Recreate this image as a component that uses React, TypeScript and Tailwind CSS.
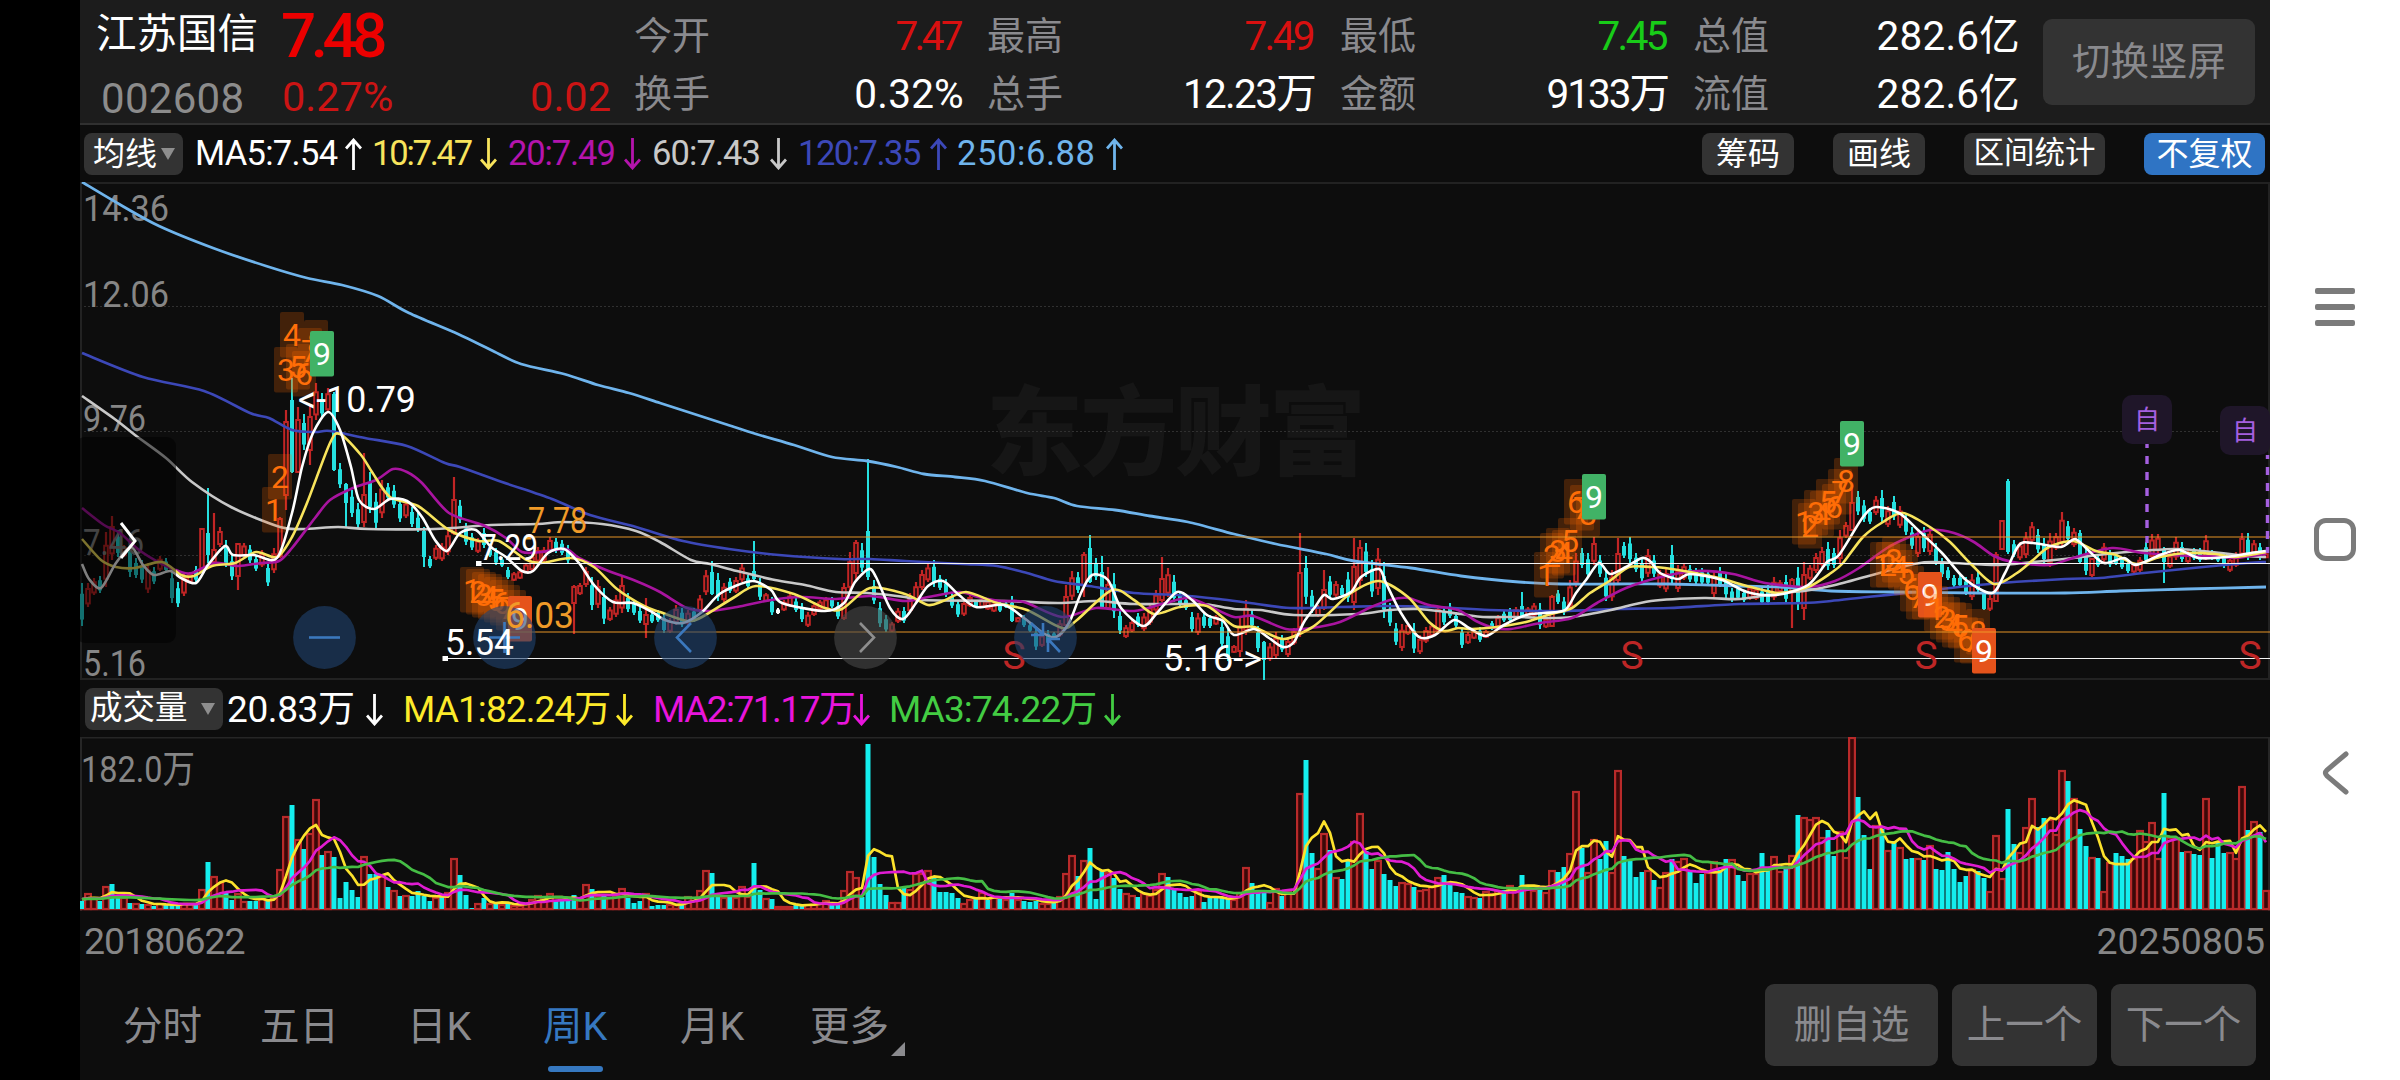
import { ReactNode } from "react"

// one token per week: colour (c = down, r = up), high y, low y, optional body top and bottom
const CANDLES = `
c583,626 r583,607 r578,595 c576,593 r532,587 r516,560 c530,557 r545,557 c543,577 c558,578
c560,583 r563,593 c567,584 r556,571 c558,572 c570,603 c582,607 r573,596 r572,583 c566,582
r528,573,529,572 c488,563,533,555 r513,563,550,562 r527,547 c540,567 c555,580 r543,590,544,576 r543,557 c545,563 c555,571
r550,567 c562,586 r548,573 r517,558,519,556 r410,510,422,495 c378,473,400,472 r407,473,420,472 c414,450 r405,465,417,450 r383,420
c393,417 r388,413 c392,471,394,470 c463,488 c483,527,484,503 c490,517 c503,528 r453,527,495,522 c472,513 c493,528
r480,518 c483,500 c485,508 c498,522 r500,518 c507,527 c513,532 c527,567,531,557 c556,568 r545,560
r543,561 r530,555 r477,535,500,533 c500,523 c523,545 c533,550 r538,553 c528,548 c547,557 c548,565
c557,567 c567,579 r572,581 r570,579 r563,573 r553,572 r547,563 r547,562 r537,553 c538,553
c540,555 c545,563 r585,634,587,603 r583,595 r567,587 c577,610 r580,608 c588,624 r607,621 r595,617
r577,613 c593,612 c600,615 c607,623 r598,638,615,624 c612,623 c610,622 c613,633 r618,633 r605,625
c608,627 r610,625 c608,622 r595,613 r570,595 c561,595,572,594 c573,601 r583,602 c578,593 r577,593
r564,582 c575,588 c541,580,571,579 c578,600 r593,602 c597,615 w608,614 r600,611 r593,607 c598,612
c603,622 r612,627 r603,616 r600,610 r597,610 c597,608 c602,619 r583,620,588,618 r552,593 r540,580,543,573
c543,572 c459,580,531,577 c580,604 c602,627 c615,632 r622,632 r608,623 c607,623 r593,613 r582,603
r570,590 r564,582 c560,587 c575,590 c579,597 c592,608 c600,617 r600,616 r595,607 c600,608
r598,608 r600,610 r602,612 c602,612 c602,608 c596,622,603,621 r617,622 c615,627 c623,632 c627,650
r633,647 c630,645 c632,638 r620,637 r585,628,597,625 r571,600 c572,593 r552,597,555,585 c535,583,548,582 c558,580
c556,608,572,607 r567,610,585,608 c573,618 c610,634 r625,638 r620,632 c613,627 r613,631 r603,625 r590,613
r557,602,579,600 r568,597 c575,602 c592,607 c597,610 c612,632 r613,635 c613,628 c615,628 r615,625
c620,648 c628,661 r645,653 r617,657 r600,635 c610,628 c626,652 c641,680,642,660 r643,661 r632,659
c635,652 r637,657 r628,645 r533,637,573,627 c556,604 c590,613 r605,617 r570,610,590,608 c576,598 r581,597
c585,597 c572,602 r538,610,567,602 r540,587,548,580 c543,577 c560,597 r548,595 c562,618 c603,626 c623,645
r624,651 r623,635 c623,653 r635,654 r627,643 r623,637 r607,633,610,631 c607,625 c603,618 c612,628
c627,648 r632,644 r630,639 c627,642 r630,638 c621,630 r615,628 c611,622 c608,622 r607,620
c592,618,606,616 r607,617 r603,617 c603,629 r617,628 r595,627,597,626 c590,604 c597,615 r580,610 r553,587
c548,568 c553,578 r537,565 c555,577 c570,601 r570,601 r538,583,554,580 c542,558 c537,563 c553,572
c557,582 r549,577 c555,577 r570,588 r568,592 c545,585 r565,592 r563,580 c565,582 c568,584
c568,585 c570,585 r571,597 c567,587 c573,598 c588,602 c585,600 c590,602 r585,600 r587,600
c587,605 c585,605 r577,600 r580,593 c575,603 r578,628,580,592 c567,610 r562,620,575,608 r565,580 r553,573
r547,567 c542,570 c548,568 r530,563 r522,538 r485,530,503,530 c491,515 c500,522 c508,524 r496,515
c490,522 r506,527 c496,520 r506,528 c513,535 c527,549 r530,557 c527,552 r528,555 c543,565
c558,577 c567,580 c575,587 c575,587 c577,595 r574,600 c572,593 c590,610,593,609 r595,611 r552,602,555,601
r520,550,521,549 c479,554,481,552 c540,557 r542,560 r532,558 r522,543 c529,553 c538,563 r533,567 r533,550
r512,547 c521,542 r528,547 c530,563,533,562 c547,575 r558,577,559,575 c555,567 r543,562 c550,567 c553,565
c557,569 c560,573 r563,573 r557,572 c542,563 r534,560 r534,553 c547,583,550,562 r553,568 r537,560
c542,562 r550,563 c548,560 c548,562 r535,560 c550,560 c552,562 c553,568 r557,572 r552,567
r533,557 c533,560 r540,557 c543,560 r553,558`

const VOLUMES = `
c8 r16 r12 c8 r23 c25 c12 r12 c6 r6 c5 r5 c3 r6 c4 c4 c4 r6 r6 c5
r20 c47 r33 r27 c16 c9 r16 r8 c8 c8 r11 c8 r12 r40 r93 c104 r70 c60 r76 r110
c54 r58 c52 c11 c27 c19 c12 r53 c35 c35 r33 c22 r19 c13 r14 c13 c18 c13 c8 r12
c12 r17 r51 c34 c14 c1 r6 c11 r6 c5 r5 c5 r4 r4 r6 r10 r14 r11 r16 c9
c9 c9 c14 r11 r25 c20 r14 c15 r12 r14 r21 c11 c6 c8 r16 c3 c4 c4 r5 r5
c5 r13 r12 r19 r39 c36 c14 r12 c12 r12 r23 r13 c46 c19 r11 c10 r3 r3 r3 c4
c5 r5 r5 r6 r9 c4 c4 r19 r38 r32 c12 c165 c52 c25 c14 r7 r7 c21 r20 r36
r36 r39 c32 c17 c17 c16 c11 r6 r10 c10 r17 c9 r12 c10 r10 c16 r10 c8 c7 c8
r6 r6 c7 r13 r36 r54 c33 r49 c61 c10 c38 r37 c31 c20 r16 r14 c12 r16 r14 r20
r36 c32 c19 c16 c12 c13 r18 c7 c11 c11 c11 c11 r10 r17 r42 c26 c17 c17 r7 r21
c13 r19 r17 r116 c149 c56 r41 r76 c59 r32 c30 c48 r68 r96 c58 c40 r49 c35 c29 c23
r27 r26 c22 r19 r20 r23 r32 c34 c25 c17 c16 r13 r12 c11 r18 r16 r19 c19 r24 r19
c34 r21 r19 c19 r17 r39 c37 c42 r56 r118 c61 r37 r70 c50 c68 r37 r139 c53 c48 c32
c37 r39 c29 r22 r37 c50 r48 r51 c37 c26 c35 r37 r48 c39 c50 r50 c34 c28 r36 r36
c56 c38 r53 r38 c40 r54 c94 r92 r90 r92 r72 c79 c53 r78 r52 r172 c112 c74 c40 r84
c80 r59 c68 r62 c50 c51 r51 c49 r64 c40 c39 c57 c40 c27 c33 r40 c38 c31 r18 r74
r31 c100 c65 r57 r82 r111 c82 c91 r90 r75 r139 c128 r111 c80 c63 r52 c51 r18 r47 c56
c53 c50 r51 r79 r68 r87 r51 c116 r72 r72 c57 r58 c55 c54 r111 c51 c66 c56 r57 r51
r123 c79 r88 c77 r19`

const LINES = [
    { color: "#6fb4ec", pts: "82,182 119,204 159,226 213,248 266,266 307,278 342,285 378,296 409,313 458,334 491,350 521,364 564,374 598,385 629,393 660,403 691,413 725,424 756,434 794,445 832,457 867,461 897,467 924,474 955,477 985,481 1027,493 1054,498 1077,506 1115,510 1150,516 1188,522 1234,534 1276,544 1326,554 1354,561 1411,568 1461,576 1519,582 1561,584 1615,584 1669,584 1740,586 1780,587 1831,591 1899,592 1978,593 2065,593 2120,591 2187,589 2266,587" },
    { color: "#3c48b8", pts: "82,353 143,377 204,391 250,413 269,418 292,430 315,432 330,431 365,438 407,446 445,463 460,467 502,482 552,499 590,515 636,527 683,541 729,549 779,555 840,559 870,559 905,561 962,564 997,566 1027,573 1054,581 1089,586 1134,593 1177,595 1219,599 1250,603 1290,608 1340,607 1383,606 1433,607 1490,610 1561,611 1615,609 1669,608 1740,604 1804,603 1831,601 1867,597 1907,593 1950,588 2001,583 2065,579 2100,578 2144,573 2203,567 2247,563 2266,562" },
    { color: "#c8c8c8", pts: "82,396 116,420 135,435 166,458 192,482 231,507 280,527 303,529 338,527 368,529 434,529 491,525 537,524 564,522 602,524 636,531 660,542 691,560 710,564 737,571 775,580 805,585 836,592 867,593 905,597 920,600 1004,601 1058,603 1096,601 1134,604 1196,604 1211,605 1234,609 1261,610 1294,615 1358,614 1390,610 1419,609 1461,614 1483,617 1519,617 1547,618 1572,617 1611,610 1651,601 1704,598 1740,599 1780,593 1804,591 1835,585 1883,572 1914,564 1934,562 1994,565 2033,562 2073,558 2116,553 2175,549 2211,552 2247,556 2266,557" },
    { color: "#a8149f", pts: "82,508 104,525 120,533 139,550 162,564 181,572 192,573 215,563 238,566 261,563 279,561 292,548 315,518 330,500 353,488 376,480 393,469 407,472 422,483 449,513 483,525 506,538 522,552 541,552 566,549 579,558 606,570 636,581 660,592 687,608 710,611 737,607 771,600 802,597 836,599 870,596 905,601 928,597 959,592 978,597 1001,601 1024,602 1062,617 1096,608 1134,611 1165,603 1188,598 1207,605 1234,617 1253,616 1286,629 1311,628 1340,622 1369,608 1390,600 1408,598 1429,605 1458,610 1476,621 1494,628 1511,629 1540,623 1572,618 1597,603 1626,588 1661,577 1697,571 1733,574 1765,583 1808,587 1835,581 1859,568 1887,548 1907,538 1930,530 1954,533 1974,542 1994,556 2013,562 2049,565 2073,558 2112,548 2144,553 2191,556 2215,556 2235,558 2266,554" },
    { color: "#f8e45c", pts: "82,539 101,560 116,567 135,568 162,562 181,575 194,576 212,566 235,563 256,552 277,557 292,537 307,503 330,443 340,434 361,455 372,472 390,497 418,506 449,530 479,541 499,541 525,559 541,563 571,558 594,567 617,589 644,606 660,612 687,621 702,617 733,598 756,586 794,594 825,608 842,609 870,588 905,594 928,605 943,601 966,592 997,603 1027,610 1062,628 1077,620 1112,590 1134,600 1154,614 1180,607 1207,606 1234,626 1254,627 1283,639 1311,628 1329,613 1351,593 1379,581 1408,597 1429,622 1444,631 1458,628 1472,629 1497,627 1526,622 1551,614 1572,608 1590,593 1611,580 1629,567 1651,567 1665,568 1690,572 1719,578 1751,587 1779,593 1808,587 1831,573 1843,563 1863,537 1883,522 1903,513 1930,527 1950,542 1970,563 1994,584 2017,573 2033,560 2049,547 2073,541 2096,551 2116,555 2136,564 2160,557 2187,553 2215,554 2235,557 2266,552" },
    { color: "#ffffff", pts: "82,564 89,579 101,588 116,563 131,547 143,565 154,575 170,571 181,578 196,583 208,565 225,546 233,555 254,555 277,558 292,513 302,467 313,433 328,412 340,430 351,467 359,500 374,509 390,499 407,501 422,517 435,540 447,551 460,533 476,530 491,547 506,557 522,571 533,571 548,553 564,549 579,563 594,585 613,602 633,603 652,612 665,620 683,623 702,612 721,593 752,581 771,590 782,603 825,611 844,603 855,582 869,569 876,577 890,608 903,619 916,603 928,586 943,581 959,595 976,607 1004,605 1024,618 1043,633 1056,637 1069,623 1081,593 1092,575 1108,580 1121,608 1143,626 1157,613 1177,592 1192,600 1207,615 1223,621 1234,635 1254,629 1269,638 1283,647 1294,642 1304,622 1315,607 1324,595 1333,599 1351,592 1361,577 1379,569 1386,583 1401,613 1419,637 1435,635 1454,620 1469,628 1486,636 1504,625 1526,615 1544,613 1565,610 1576,593 1586,580 1599,563 1610,574 1626,567 1642,558 1651,562 1660,573 1678,579 1690,574 1722,580 1747,592 1776,595 1808,585 1827,562 1839,555 1863,517 1876,507 1899,513 1918,530 1942,553 1966,580 1992,593 2005,573 2019,545 2033,543 2061,547 2075,539 2088,550 2104,563 2124,558 2136,565 2160,555 2179,550 2199,558 2227,557 2251,553 2266,551" },
]

// first candle index of every 1..9 count, the box tops, and the colour of the last box
const COUNTS = [
    { start: 32, tops: [487, 454, 347, 312, 344, 351, 328, 320, 331], end: "#41b266" },
    { start: 65, tops: [567, 569, 572, 574, 577, 580, 585, 590, 596], end: "#e5531b" },
    { start: 244, tops: [552, 533, 528, 530, 518, 479, 485, 491, 474], end: "#41b266" },
    { start: 287, tops: [499, 503, 490, 491, 479, 484, 469, 458, 421], end: "#41b266" },
    { start: 300, tops: [542, 542, 537, 544, 550, 566, 574, 574, 572], end: "#e5531b" },
    { start: 309, tops: [586, 594, 597, 602, 603, 617, 618, 609, 628], end: "#e5531b" },
]

const X = (i: number) => 82 + i * 6

const candles = CANDLES.trim().split(/\s+/).map((t) => {
    const n = t.slice(1).split(",").map(Number)
    const range = n[1] - n[0]
    return { kind: t[0], hi: n[0], lo: n[1], top: n[2] ?? n[0] + range * 0.25, bot: n[3] ?? n[1] - range * 0.15 }
})

const volumes = VOLUMES.trim().split(/\s+/).map((t) => ({ kind: t[0], h: Number(t.slice(1)) }))

const volumeMa = (size: number) =>
    volumes.map((_, i) => {
        let sum = 0
        for (let k = i - size + 1; k <= i; k++) sum += k < 0 ? 10 : volumes[k].h
        return `${X(i)},${(909 - sum / size).toFixed(1)}`
    }).join(" ")

const smooth = (pts: string) => {
    const p = pts.split(" ").map((s) => s.split(",").map(Number))
    let d = `M${p[0][0]} ${p[0][1]}`
    for (let i = 0; i < p.length - 1; i++) {
        const a = p[i - 1] ?? p[i], b = p[i], c = p[i + 1], e = p[i + 2] ?? c
        d += `C${b[0] + (c[0] - a[0]) / 7} ${b[1] + (c[1] - a[1]) / 7} ${c[0] - (e[0] - b[0]) / 7} ${c[1] - (e[1] - b[1]) / 7} ${c[0]} ${c[1]}`
    }
    return d
}

const Arrow = ({ down }: { down?: boolean }) => (
    <svg width="17" height="32" viewBox="0 0 17 32" fill="none" stroke="currentColor" strokeWidth="2.8" className={"shrink-0 " + (down ? "rotate-180" : "")}>
        <path d="M8.5 32V2M1 10.5L8.5 2L16 10.5" />
    </svg>
)

const Label = ({ x, y, w, fill, children }: { x: number, y: number, w: number, fill: string, children: ReactNode }) => (
    <text x={x} y={y} textLength={w} lengthAdjust="spacingAndGlyphs" fontSize="37.5" fill={fill}>{children}</text>
)

const Quote = ({ name, value, cls }: { name: string, value: string, cls: string }) => (
    <div className="flex items-center justify-between w-[330px] h-[58px]">
        <div className="text-[38px] text-[#8a8a8e]">{name}</div>
        <div className={"text-[40.5px] " + cls}>{value}</div>
    </div>
)

const Header = () => (
    <div className="flex h-[125px] bg-[#1c1c1c] border-b-2 border-[#303030] shrink-0">
        <div className="w-[202px] pl-4 shrink-0">
            <div className="h-[66px] flex items-center pt-[3px] text-[40.5px] text-white whitespace-nowrap">江苏国信</div>
            <div className="h-[62px] flex items-center pt-[3px] pl-[5px] text-[42px] text-[#8c8c8c] tracking-[0.3px]">002608</div>
        </div>
        <div className="w-[352px] shrink-0">
            <div className="h-[66px] flex items-center pt-[6px] text-[62px] font-medium text-[#ec0000] tracking-[-5.5px]">
                <div className="pr-2 ml-[-1px]">7.48</div>
            </div>
            <div className="h-[58px] flex items-center justify-between pt-[3px] pr-[23px] text-[41.5px] text-[#cc1414]">
                <div>0.27%</div><div>0.02</div>
            </div>
        </div>
        <div className="grid grid-cols-4 gap-x-[23px] pt-[7px] content-start shrink-0">
            <Quote name="今开" value="7.47" cls="text-[#d81010] tracking-[-3.6px] pr-1" />
            <Quote name="最高" value="7.49" cls="text-[#d81010] tracking-[-2.6px] pr-1" />
            <Quote name="最低" value="7.45" cls="text-[#18cc18] tracking-[-2.6px] pr-1" />
            <Quote name="总值" value="282.6亿" cls="text-white tracking-[0.2px] pr-[3px]" />
            <Quote name="换手" value="0.32%" cls="text-white tracking-[0.2px]" />
            <Quote name="总手" value="12.23万" cls="text-white tracking-[-1.7px] pr-[2px]" />
            <Quote name="金额" value="9133万" cls="text-white tracking-[-2px] pr-[2px]" />
            <Quote name="流值" value="282.6亿" cls="text-white tracking-[0.2px] pr-[3px]" />
        </div>
        <div className="ml-[20px] mt-[19px] w-[212px] h-[86px] rounded-[9px] bg-[#333333] flex items-center justify-center text-[38.5px] text-[#8a8a8e] shrink-0">切换竖屏</div>
    </div>
)

const MA_ITEMS = [
    { text: "MA5:7.54", box: "w-[177px] text-white", track: "tracking-[-0.7px] w-[150px]" },
    { text: "10:7.47", down: true, box: "w-[136px] text-[#f8e45c]", track: "tracking-[-2.2px] w-[108px]" },
    { text: "20:7.49", down: true, box: "w-[144px] text-[#b414ac]", track: "tracking-[-1.1px] w-[116px]" },
    { text: "60:7.43", down: true, box: "w-[146px] text-[#c8c8c8]", track: "tracking-[-0.9px] w-[118px]" },
    { text: "120:7.35", box: "w-[159px] text-[#3c48b8]", track: "tracking-[-1.5px] w-[132px]" },
    { text: "250:6.88", box: "w-[170px] text-[#6fb4ec]", track: "tracking-[0.6px] w-[149px]" },
]

const MaBar = () => (
    <div className="flex items-center h-[57px] pl-1 pr-1 shrink-0">
        <div className="w-[99px] h-[42px] rounded-[8px] bg-[#333333] flex items-center justify-between pl-[9px] pr-2 text-[32px] text-white">
            均线
            <svg width="14" height="12"><path d="M0 0H14L7 12Z" fill="#8e8e8e" /></svg>
        </div>
        <div className="flex ml-[12px] text-[34.5px]">
            {MA_ITEMS.map((m) => (
                <div key={m.text} className={"flex items-center whitespace-nowrap " + m.box}>
                    <div className={m.track}>{m.text}</div>
                    <Arrow down={m.down} />
                </div>
            ))}
        </div>
        <div className="ml-auto flex items-center text-white text-[32px]">
            <div className="w-[92px] h-[42px] rounded-[8px] bg-[#333333] flex items-center justify-center">筹码</div>
            <div className="w-[92px] h-[42px] ml-[39px] rounded-[8px] bg-[#333333] flex items-center justify-center">画线</div>
            <div className="w-[141px] h-[42px] ml-[39px] rounded-[8px] bg-[#333333] flex items-center justify-center text-[30.5px]">区间统计</div>
            <div className="w-[121px] h-[42px] ml-[39px] mr-px rounded-[8px] bg-[#2f74c4] flex items-center justify-center">不复权</div>
        </div>
    </div>
)

const PriceChart = () => (
    <svg width="2190" height="498" viewBox="80 182 2190 498" className="block shrink-0">
        <text x="986" y="467" fontSize="97" fontWeight="900" textLength="380" fill="#161616">东方财富</text>
        <path d="M80 306.5H2270M80 431.5H2270M80 555.5H2270" stroke="#303030" strokeWidth="1" strokeDasharray="2 2" />
        <path d="M81 679V183H2269V679Z" fill="none" stroke="#222222" strokeWidth="2" />

        {candles.map((c, i) => c.kind === "r" ? (
            <g key={i} stroke="#c22525" fill="#0d0d0d">
                <path d={`M${X(i)} ${c.hi}V${c.top}M${X(i)} ${c.bot}V${c.lo}`} strokeWidth="2.2" />
                <rect x={X(i) - 1.8} y={c.top} width="3.6" height={Math.max(2, c.bot - c.top)} strokeWidth="2" />
            </g>
        ) : (
            <g key={i} fill={c.kind === "c" ? "#25e0e0" : "#ffffff"}>
                <rect x={X(i) - 1} y={c.hi} width="2" height={c.lo - c.hi} />
                <rect x={X(i) - 2} y={c.top} width="4" height={c.bot - c.top} />
            </g>
        ))}

        {[[83, 221, 86, "14.36"], [83, 307, 86, "12.06"], [83, 431, 63, "9.76"], [83, 555, 61, "7.46"], [83, 676, 63, "5.16"]].map(([x, y, w, t]) => (
            <Label key={t} x={x as number} y={y as number} w={w as number} fill="#868686">{t}</Label>
        ))}

        {[1, 0, 2, 3, 4, 5].map((k) => (
            <path key={k} d={smooth(LINES[k].pts)} fill="none" stroke={LINES[k].color} strokeWidth={k === 0 ? 2.8 : 2.6} strokeLinejoin="round" />
        ))}

        {COUNTS.map((g) => g.tops.map((y, n) => {
            const last = n === 8
            const x = X(g.start + n)
            return (
                <g key={g.start + "-" + n}>
                    <rect x={x - 12} y={y} width="24" height="45.5" rx="2" fill={last ? g.end : "#ff6a00"} fillOpacity={last ? 1 : 0.22} />
                    <text x={x} y={y + 34} textAnchor="middle" fontSize="32" fill={last ? "#ffffff" : "#ff6f0a"}>{n + 1}</text>
                </g>
            )
        }))}

        <g fill="none">
            <path d="M529 537H2270M505 632H2270" stroke="#f09a28" strokeOpacity="0.48" strokeWidth="2" />
            <path d="M478 563.5H2270M445 658.5H2270" stroke="#f4f4f4" strokeWidth="1.2" />
        </g>
        <path d="M526 534.5h5.5v5h-5.5zM503 629.5h5.5v5h-5.5z" fill="#f09a28" />
        <path d="M476 561h5.5v5h-5.5zM442.5 656h5.5v5h-5.5z" fill="#ffffff" />

        <g fontSize="39" fill="#bd2626" textAnchor="middle">
            <text x="1014" y="669">S</text>
            <text x="1632" y="669">S</text>
            <text x="1926" y="669">S</text>
            <text x="2250" y="669">S</text>
        </g>

        <path d="M2147 444V448M2147 456V543" stroke="#a560e0" strokeWidth="3.4" strokeDasharray="8 8" />
        <path d="M2267.5 455V553" stroke="#a560e0" strokeWidth="3.4" strokeDasharray="8 8" strokeDashoffset="4" />
        <rect x="2122" y="395" width="50" height="49" rx="10" fill="#1f1629" />
        <rect x="2220" y="406" width="50" height="49" rx="10" fill="#1f1629" />
        <g fontSize="26" fill="#a560e0" textAnchor="middle">
            <text x="2147" y="429">自</text>
            <text x="2245" y="440">自</text>
        </g>

        {/* drawer handle */}
        <rect x="76" y="437" width="100" height="206" rx="9" fill="#000000" fillOpacity="0.5" />
        <path d="M121 523L135 541L121 558" fill="none" stroke="#ffffff" strokeWidth="3" />

        {/* floating zoom and pan buttons */}
        <g fill="#1f436f" fillOpacity="0.6">
            <circle cx="324.5" cy="637.5" r="31.4" />
            <circle cx="504.5" cy="637.5" r="31.4" />
            <circle cx="685.5" cy="637.5" r="31.4" />
            <circle cx="865.5" cy="637.5" r="31.4" fill="#484848" />
            <circle cx="1045.5" cy="637.5" r="31.4" />
        </g>
        <g fill="none" stroke="#3b78bd" strokeWidth="2.6">
            <path d="M309 637.5H340" />
            <path d="M489 637.5H520M504.5 622V653" />
            <path d="M691 623L677 637.5L691 652" />
            <path d="M860 623L874 637.5L860 652" stroke="#8e8e8e" />
            <path d="M1031 635H1043V623M1060 639H1048V652M1048 639L1060 652M1031 623L1042 634" />
        </g>

        <Label x={298} y={412} w={118} fill="#ffffff">&lt;-10.79</Label>
        <Label x={1163} y={671} w={99} fill="#ffffff">5.16-&gt;</Label>
        <Label x={480} y={560} w={58} fill="#ffffff">7.29</Label>
        <Label x={445} y={655} w={69} fill="#ffffff">5.54</Label>
        <Label x={528} y={533} w={59} fill="#f09a28">7.78</Label>
        <Label x={505} y={628} w={69} fill="#f09a28">6.03</Label>
    </svg>
)

const VOL_ITEMS = [
    { text: "20.83万", box: "w-[176px] text-white", track: "w-[139px] tracking-[-0.4px]" },
    { text: "MA1:82.24万", box: "w-[250px] text-[#fdea2a]", track: "w-[213px] tracking-[-0.9px]" },
    { text: "MA2:71.17万", box: "w-[236px] text-[#e815dc]", track: "w-[200px] tracking-[-1.5px]" },
    { text: "MA3:74.22万", box: "w-[249px] text-[#43cc43]", track: "w-[215px] tracking-[-0.9px]" },
]

const VolumeBar = () => (
    <div className="flex items-center h-[57px] pl-[5px] shrink-0">
        <div className="w-[138px] h-[42px] rounded-[8px] bg-[#333333] flex items-center justify-between pl-[5px] pr-2 text-[32.5px] text-white">
            成交量
            <svg width="14" height="12"><path d="M0 0H14L7 12Z" fill="#8e8e8e" /></svg>
        </div>
        <div className="flex ml-[4px] text-[37px]">
            {VOL_ITEMS.map((m) => (
                <div key={m.text} className={"flex items-center whitespace-nowrap pt-[2px] " + m.box}>
                    <div className={m.track}>{m.text}</div>
                    <Arrow down />
                </div>
            ))}
        </div>
    </div>
)

const VolumeChart = () => (
    <svg width="2190" height="175" viewBox="80 737 2190 175" className="block shrink-0">
        <path d="M81 911V737.5H2269V911" fill="none" stroke="#262626" strokeWidth="2" />
        <path d="M80 909.5H2270" stroke="#8f2828" strokeWidth="1.5" />
        {volumes.map((v, i) => v.kind === "r" ? (
            <rect key={i} x={X(i) - 2.9} y={910 - v.h} width="5.8" height={v.h - 1} fill="#3a0808" stroke="#b82a2a" strokeWidth="2.2" />
        ) : (
            <rect key={i} x={X(i) - 2.5} y={909 - v.h} width="5" height={v.h} fill="#14eeee" />
        ))}
        <Label x={81} y={782} w={114} fill="#868686">182.0万</Label>
        <g fill="none" strokeWidth="2.7" strokeLinejoin="round">
            <polyline points={volumeMa(5)} stroke="#fce22c" />
            <polyline points={volumeMa(10)} stroke="#e01cd2" />
            <polyline points={volumeMa(20)} stroke="#45bd45" />
        </g>
    </svg>
)

const Tab = ({ active, cls, children }: { active?: boolean, cls: string, children: ReactNode }) => (
    <div className={"flex flex-col items-start text-[39.5px] whitespace-nowrap " + cls}>
        <div className={"h-[79px] flex items-center " + (active ? "text-[#3678c0]" : "text-[#8a8a8e]")}>{children}</div>
        {active && <div className="w-[55px] h-[6px] ml-[5px] rounded-full bg-[#3678c0]" />}
    </div>
)

const Footer = () => (
    <div className="flex flex-1 flex-col">
        <div className="flex justify-between items-center h-[60px] pl-[4px] pr-[5px] text-[37.5px] text-[#868686]">
            <div className="tracking-[-1px]">20180622</div>
            <div>20250805</div>
        </div>
        <div className="flex flex-1 pt-[12px] pl-[43px] pr-[14px]">
            <div className="flex pt-[3px]">
                <Tab cls="w-[137px]">分时</Tab>
                <Tab cls="w-[147px]">五日</Tab>
                <Tab cls="w-[136px]">日K</Tab>
                <Tab cls="w-[137px]" active>周K</Tab>
                <Tab cls="w-[130px]">月K</Tab>
                <Tab cls="w-[120px]">
                    更多
                    <svg width="14" height="14" className="ml-[2px] mt-[44px]"><path d="M14 0V14H0Z" fill="#8a8a8e" /></svg>
                </Tab>
            </div>
            <div className="ml-auto flex gap-[14px] text-[38.5px] text-[#8a8a8e]">
                <div className="w-[173px] h-[82px] rounded-[9px] bg-[#333333] flex items-center justify-center">删自选</div>
                <div className="w-[145px] h-[82px] rounded-[9px] bg-[#333333] flex items-center justify-center">上一个</div>
                <div className="w-[145px] h-[82px] rounded-[9px] bg-[#333333] flex items-center justify-center">下一个</div>
            </div>
        </div>
    </div>
)

const SystemNav = () => (
    <div className="w-[130px] h-full bg-white flex flex-col items-center">
        <div className="mt-[288px] flex flex-col gap-[10px]">
            <div className="w-10 h-[6px] rounded-[2px] bg-[#7b7b7b]" />
            <div className="w-10 h-[6px] rounded-[2px] bg-[#7b7b7b]" />
            <div className="w-10 h-[6px] rounded-[2px] bg-[#7b7b7b]" />
        </div>
        <div className="mt-[192px] w-[42px] h-[43px] rounded-[12px] border-[5px] border-[#7b7b7b]" />
        <svg width="28" height="46" viewBox="0 0 28 46" className="mt-[189px]" fill="none" stroke="#7b7b7b" strokeWidth="5" strokeLinecap="round">
            <path d="M25 4L6 20Q3 23 6 26L25 42" />
        </svg>
    </div>
)

export default function App() {
    return (
        <div className="flex w-[2400px] h-[1080px] overflow-hidden bg-black leading-none font-['Roboto','Noto_Sans_CJK_SC',sans-serif]">
            <div className="w-20 shrink-0" />
            <div className="flex flex-col w-[2190px] h-full bg-[#0d0d0d] shrink-0">
                <Header />
                <MaBar />
                <PriceChart />
                <VolumeBar />
                <VolumeChart />
                <Footer />
            </div>
            <SystemNav />
        </div>
    )
}
